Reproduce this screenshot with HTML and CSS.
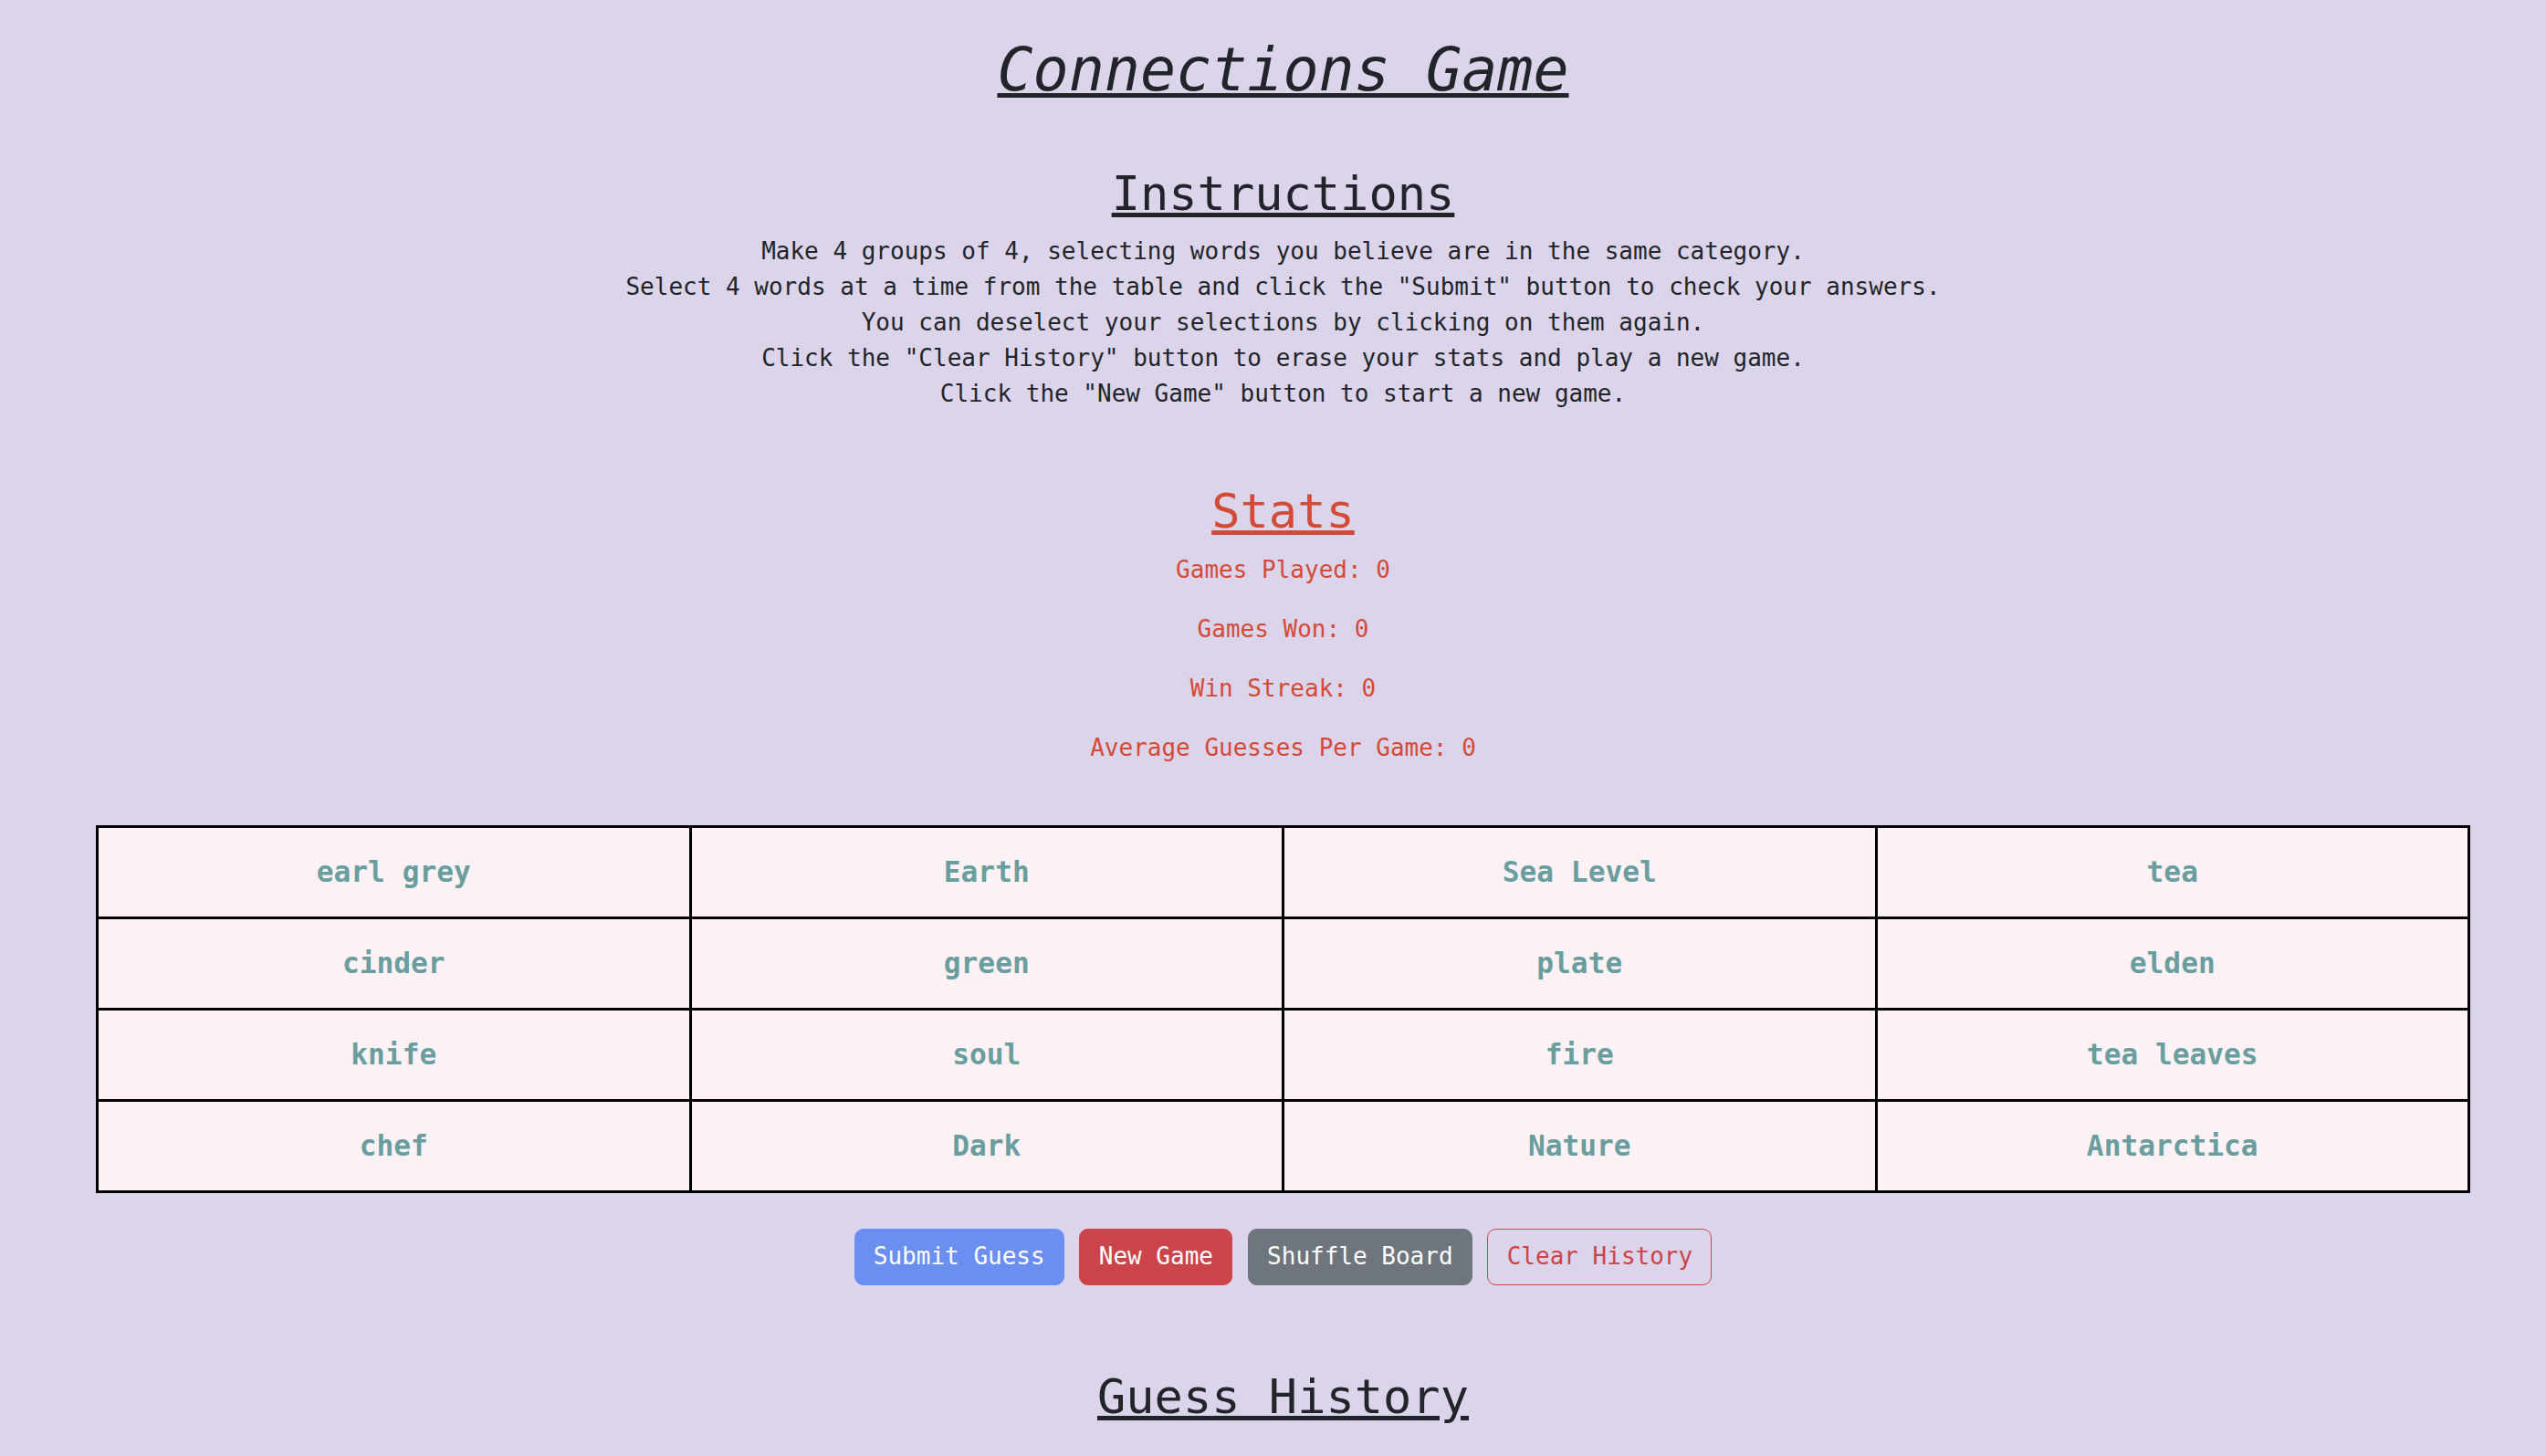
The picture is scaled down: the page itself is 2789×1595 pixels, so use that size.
FILE: index.html
```html
<!DOCTYPE html>
<html lang="en">
<head>
<meta charset="utf-8">
<title>Connections Game</title>
<link rel="stylesheet" href="styles.css">
</head>
<body>
<main class="page">
  <h1 class="title">Connections Game</h1>

  <section class="instructions">
    <h2 class="heading">Instructions</h2>
    <p class="instructions-text">Make 4 groups of 4, selecting words you believe are in the same category.<br>Select 4 words at a time from the table and click the "Submit" button to check your answers.<br>You can deselect your selections by clicking on them again.<br>Click the "Clear History" button to erase your stats and play a new game.<br>Click the "New Game" button to start a new game.</p>
  </section>

  <section class="stats">
    <h2 class="heading">Stats</h2>
    <p class="stat">Games Played: 0</p>
    <p class="stat">Games Won: 0</p>
    <p class="stat">Win Streak: 0</p>
    <p class="stat">Average Guesses Per Game: 0</p>
  </section>

  <table class="board">
    <tbody>
      <tr><td>earl grey</td><td>Earth</td><td>Sea Level</td><td>tea</td></tr>
      <tr><td>cinder</td><td>green</td><td>plate</td><td>elden</td></tr>
      <tr><td>knife</td><td>soul</td><td>fire</td><td>tea leaves</td></tr>
      <tr><td>chef</td><td>Dark</td><td>Nature</td><td>Antarctica</td></tr>
    </tbody>
  </table>

  <div class="controls">
    <button class="btn btn-primary">Submit Guess</button>
    <button class="btn btn-danger">New Game</button>
    <button class="btn btn-secondary">Shuffle Board</button>
    <button class="btn btn-outline-danger">Clear History</button>
  </div>

  <section class="history">
    <h2 class="heading">Guess History</h2>
  </section>
</main>
</body>
</html>
```

FILE: styles.css
```css
html, body {
  margin: 0;
  padding: 0;
}

body {
  background: #dcd4ea;
  color: #212529;
  font-family: "DejaVu Sans Mono", monospace;
  font-size: 26px;
  line-height: 1.5;
}

.page {
  display: flex;
  flex-direction: column;
  padding: 38px 83px 0 105px;
  text-align: center;
}

.title {
  margin: 0 0 13px;
  font-size: 65px;
  font-weight: 400;
  font-style: italic;
  line-height: 1.2;
  text-decoration: underline;
  text-decoration-thickness: 5px;
}

.heading {
  margin: 0 0 13px;
  font-size: 52px;
  font-weight: 400;
  line-height: 1.2;
  text-decoration: underline;
  text-decoration-thickness: 4.5px;
}

.instructions {
  margin-top: 52px;
}

.instructions-text {
  margin: 0 0 26px;
}

.stats {
  margin-top: 52px;
  color: #d34b37;
}

.stat {
  margin: 0 0 26px;
}

.board {
  margin-top: 39px;
  width: 100%;
  table-layout: fixed;
  border-collapse: separate;
  border-spacing: 0;
  border-top: 3px solid #000;
  border-left: 3px solid #000;
}

.board td {
  box-sizing: border-box;
  height: 100px;
  padding: 0;
  border-right: 3px solid #000;
  border-bottom: 3px solid #000;
  background: #fcf1f5;
  color: #6a9e9e;
  font-size: 31.2px;
  font-weight: 700;
  text-align: center;
  vertical-align: middle;
}

.controls {
  display: flex;
  justify-content: center;
  gap: 16.5px;
  margin-top: 39px;
}

.btn {
  font-family: "DejaVu Sans Mono", monospace;
  font-size: 26px;
  line-height: 1.5;
  padding: 10.5px 20.3px;
  border: 1px solid transparent;
  border-radius: 9.75px;
  color: #fff;
  cursor: pointer;
}

.btn-primary {
  background: #6b8ff0;
  border-color: #6b8ff0;
}

.btn-danger {
  background: #cb444a;
  border-color: #cb444a;
}

.btn-secondary {
  background: #6f757d;
  border-color: #6f757d;
}

.btn-outline-danger {
  background: transparent;
  border-color: #cb444a;
  color: #cb444a;
}

.history {
  margin-top: 91px;
}
```
